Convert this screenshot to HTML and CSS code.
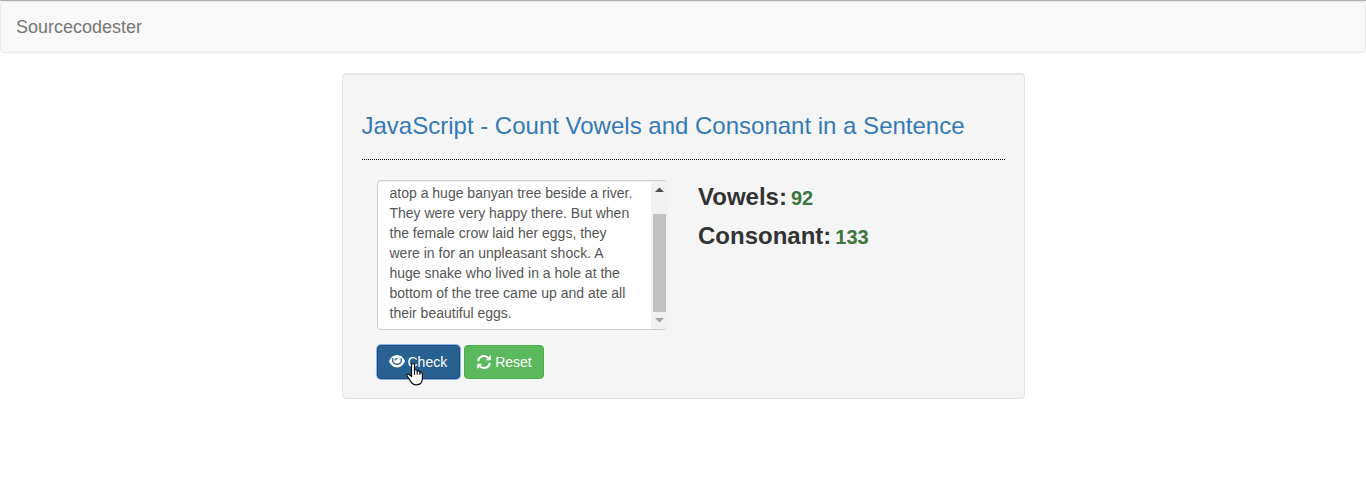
FILE: index.html
```html
<!DOCTYPE html>
<html lang="en">
<head>
<meta charset="utf-8">
<meta name="viewport" content="width=device-width, initial-scale=1">
<title>JavaScript - Count Vowels and Consonant in a Sentence</title>
<link rel="stylesheet" href="styles.css">
</head>
<body>
<nav class="navbar"><a class="brand" href="#">Sourcecodester</a></nav>
<main class="well">
  <h3 class="title">JavaScript - Count Vowels and Consonant in a Sentence</h3>
  <hr class="rule">
  <div class="row">
    <div class="col">
      <div class="field">
        <textarea class="sentence" rows="7" aria-label="Sentence">atop a huge banyan tree beside a river. They were very happy there. But when the female crow laid her eggs, they were in for an unpleasant shock. A huge snake who lived in a hole at the bottom of the tree came up and ate all their beautiful eggs.</textarea>
        <div class="scrollbar" aria-hidden="true">
          <svg class="arrow" viewBox="0 0 15 17"><path d="M4 11h9L8.500 6.500z" fill="#505050"/></svg>
          <div class="track"><div class="thumb"></div></div>
          <svg class="arrow" viewBox="0 0 15 17"><path d="M4 6h9l-4.500 4.500z" fill="#a3a3a3"/></svg>
        </div>
      </div>
      <div class="actions">
        <button class="btn btn-check" type="button">
          <svg class="icon icon-eye" viewBox="0 0 16 14"><path fill="#fff" d="M8 0C4.300 0 1.400 2.800 0 6.300c1.400 3.500 4.300 6.200 8 6.200s6.600-2.700 8-6.200C14.600 2.800 11.700 0 8 0z"/><path d="M3.900 3.200C2.800 6.800 5 9.300 8 9.300s5.200-2.500 4.100-6.100" fill="none" stroke="#286090" stroke-width="1.400"/><path d="M8.500 3.500a2 2 0 0 0-2.300 2" fill="none" stroke="#286090" stroke-width="1.400"/></svg>
          Check
          <svg class="cursor" viewBox="0 0 18 24"><path d="M5.500 14.500V3.200c0-2.300 3-2.300 3 0v5.600c0-1.500 2.700-1.400 2.700.3v.7c.3-1.300 2.700-1.100 2.700.5v.8c.5-1.100 2.500-.7 2.500.9v4.300c0 3.700-2.200 6.500-6.200 6.500-3.300 0-4.500-1.500-5.700-3.700L1.200 14c-.9-1.500 1-2.600 2.200-1.300z" fill="#fff" stroke="#111" stroke-width="1.200" stroke-linejoin="round"/><path d="M8.500 8.800v4M11.200 9.800v3M13.900 11v2" stroke="#111" stroke-width="1.100"/></svg>
        </button>
        <button class="btn btn-reset" type="button">
          <svg class="icon" viewBox="0 0 14 14"><path d="M1.200 6A5.800 5.800 0 0 1 11.200 2.900M12.800 8A5.800 5.800 0 0 1 2.800 11.100" fill="none" stroke="#fff" stroke-width="2"/><path d="M13.800 0v5.300H8.500zM.2 14V8.700h5.300z" fill="#fff"/></svg>
          Reset
        </button>
      </div>
    </div>
    <div class="col results">
      <p class="result">Vowels: <span class="count">92</span></p>
      <p class="result">Consonant: <span class="count">133</span></p>
    </div>
  </div>
</main>
</body>
</html>
```
FILE: styles.css
```css
* { box-sizing: border-box; }
body {
  margin: 0;
  border-top: 1px solid #b0b0b0;
  background: #fff;
  color: #333;
  font: 14px/20px "Liberation Sans", Arial, sans-serif;
}
.navbar {
  display: flex;
  min-height: 52px;
  margin-bottom: 20px;
  padding: 15px;
  background: #f8f8f8;
  border: 1px solid #e7e7e7;
  border-radius: 4px;
}
.brand { color: #777; font-size: 18px; text-decoration: none; }
.well {
  width: 50%;
  margin: 0 auto;
  padding: 19px;
  background: #f5f5f5;
  border: 1px solid #e3e3e3;
  border-radius: 4px;
  box-shadow: inset 0 1px 1px rgba(0, 0, 0, .05);
}
.title {
  margin: 20px 0;
  color: #337ab7;
  font-size: 24px;
  font-weight: 400;
  line-height: 26px;
}
.rule { margin: 20px 0; border: 0; border-top: 1px dotted #000; }
.row { display: grid; grid-template-columns: 1fr 1fr; }
.col { padding: 0 15px; }
.field { position: relative; margin-bottom: 15px; }
.sentence {
  display: block;
  width: 100%;
  padding: 2px 32px 6px 12px;
  overflow: hidden;
  resize: none;
  color: #555;
  background: #fff;
  border: 1px solid #ccc;
  border-radius: 4px;
  box-shadow: inset 0 1px 1px rgba(0, 0, 0, .075);
  font: inherit;
}
.scrollbar {
  position: absolute;
  inset: 1px 0 1px auto;
  display: flex;
  flex-direction: column;
  width: 17px;
  background: #f1f1f1;
}
.arrow { flex: none; width: 15px; height: 17px; }
.track { flex: 1; padding: 16px 2px 0 2px; }
.thumb { height: 100%; background: #c1c1c1; }
.actions { display: flex; gap: 4px; }
.btn {
  position: relative;
  display: flex;
  align-items: center;
  gap: 4px;
  padding: 6px 11px 6px 12px;
  color: #fff;
  border: 1px solid;
  border-radius: 4px;
  font: inherit;
}
.btn-check {
  gap: 3px;
  padding: 6px 12px 6px 11px;
  background: #286090;
  border-color: #204d74;
  box-shadow: 0 0 0 1px #8ab4f8;
}
.btn-reset { background: #5cb85c; border-color: #4cae4c; }
.icon { width: 14px; height: 14px; }
.icon-eye { width: 16px; }
.cursor { position: absolute; left: 28px; top: 16px; width: 18px; height: 24px; }
.results { padding-top: 2px; }
.result {
  display: flex;
  align-items: baseline;
  gap: 4px;
  margin: 0 0 8px;
  font-size: 24px;
  font-weight: 700;
  line-height: 30px;
}
.count { color: #3c763d; font-size: 20px; }
```
